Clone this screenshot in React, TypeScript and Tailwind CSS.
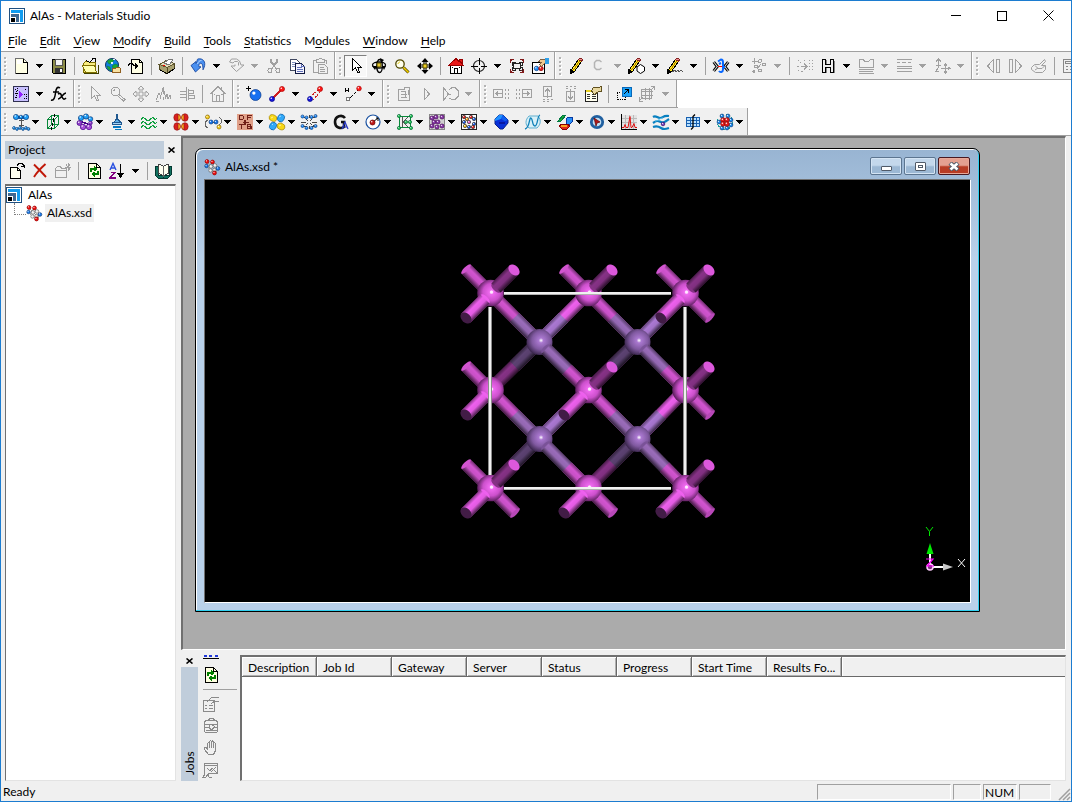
import React from "react";

type Item = string | "-" | "v" | "V";

const G = "#a0a0a0";

function Ball({ x, y, r = 2.2, c = "#1e90ff", s = "#0a3a7a" }: { x: number; y: number; r?: number; c?: string; s?: string }) {
  return (
    <g shapeRendering="auto">
      <circle cx={x} cy={y} r={r} fill={c} stroke={s} strokeWidth={0.7} />
      <circle cx={x - r * 0.3} cy={y - r * 0.35} r={r * 0.3} fill="#fff" stroke="none" />
    </g>
  );
}

const hand = (
  <>
    <path d="M6.5 3.5l2-2h4l3-1v5h-3l-3 3-2-2 2-2z" fill="#f0c890" stroke="#806040" />
    <path d="M13 0h4v6h-4z" fill="#30a0e8" stroke="none" />
  </>
);
const molecule = (
  <g shapeRendering="auto">
    <path d="M3 3l5 5 5 5M8 3l-4 6 6 5 4-5-6-5" stroke="#999" />
    <Ball x={3} y={2.5} r={1.9} c="#f01010" s="#900" />
    <Ball x={8.5} y={3} r={1.9} c="#f01010" s="#900" />
    <Ball x={2.5} y={7} r={1.7} c="#2080f0" />
    <Ball x={7} y={7.5} r={1.8} c="#eee" s="#666" />
    <Ball x={11} y={6.5} r={1.8} c="#eee" s="#666" />
    <Ball x={6.5} y={11.5} r={1.7} c="#eee" s="#666" />
    <Ball x={10.5} y={11} r={1.7} c="#ddd" s="#666" />
    <Ball x={14} y={9.5} r={1.8} c="#2080f0" />
    <Ball x={10.5} y={14} r={1.9} c="#f01010" s="#900" />
  </g>
);
const refresh = (
  <>
    <path d="M2.5.5h8l4 4v11h-12z" fill="#ffffe0" />
    <path d="M10.5.5v4h4" />
    <path d="M5 9V6h4M12 8v3H8" stroke="#008000" strokeWidth="2" />
    <path d="M8 3v6l4-3zM9 8v6l-4-3z" fill="#008000" stroke="none" />
  </>
);
const logo = (
  <>
    <path d="M.5.5h15v15H.5z" fill="#fff" stroke="#205080" />
    <path d="M2 2h12v12h-3V5H2z" fill="#109cf0" stroke="none" />
    <path d="M2 6h8v8H7V9H2z" fill="#406890" stroke="none" />
    <path d="M2 10h4v4H2z" fill="#000" stroke="none" />
  </>
);
const cursor = "M4.500.5v12l3-3 2 5h2l-2-5.500h3.500z";
const cross = "M8 0l3 3H9v4h4V5l3 3-3 3V9H9v4h2l-3 3-3-3h2V9H3v2L0 8l3-3v2h4V3H5z";
const pencil = (
  <>
    <path d="M3.500 11.500l7-10 3 2-7 10-3.500 2z" fill="#ffe820" />
    <path d="M10.500 1.500l1-1h2l1 1-1 2z" fill="#f09090" stroke="#802020" />
    <path d="M3 11l3 3-3.500 1.500z" fill="#000" />
    <path d="M11.500 3l-6 9" stroke="#b08000" />
  </>
);

const icons: Record<string, React.ReactNode> = {
  new: (
    <>
      <path d="M2.500.5h8l3.500 3.500v11.500H2.500z" fill="#ffffe4" stroke="#707070" />
      <path d="M10.500.5v4h4v11h-12" />
      <path d="M4 2h5v4H4z" fill="#fff" stroke="none" />
    </>
  ),
  save: (
    <>
      <path d="M1.500 1.500h13v14h-12l-1-1z" fill="#8c8c48" />
      <path d="M4.500 1.500h7v6h-7z" fill="#f4f4f4" stroke="#555" />
      <path d="M4 10h8v5H4z" fill="#333" stroke="none" />
      <path d="M9 11h2v3H9z" fill="#fff" stroke="none" />
    </>
  ),
  open: (
    <>
      <path d="M1.500 14.500v-9l2-2h3l1 1h6v10z" fill="#f8ec80" stroke="#807000" />
      <path d="M3.500 14.500l-3-7h12l2 7z" fill="#ffffb0" stroke="#807000" />
      <path d="M2 15.500h14V7" stroke="#404000" />
      <path d="M4.500 2.500l3 2 3-3M10 .5h3v3" />
    </>
  ),
  globe: (
    <>
      <g shapeRendering="auto">
        <circle cx="7" cy="7" r="6.500" fill="#1080e0" stroke="#103060" />
        <path d="M2 3l4-2 3 1-2 3-3 1zM7 8l3-2 3 1-1 4-3 1zM2 8l3 1 1 4-3-2z" fill="#20a830" stroke="#075" strokeWidth=".5" />
        <path d="M6 4h2v2H6zM8 1h2v1H8z" fill="#e0f0ff" stroke="none" />
      </g>
      <path d="M7.500 14.500v-4h3l1-1h3l1 1v4z" fill="#f8e0a0" stroke="#906020" />
    </>
  ),
  import: (
    <>
      <path d="M3.500 15.500V1.500h8l3 3v11z" fill="#ffffe4" />
      <path d="M11.500 1.500v3h3" />
      <path d="M0 7.500l2-2h2l2 2h2" />
      <path d="M7 5v6l3-3z" fill="#000" stroke="none" />
    </>
  ),
  print: (
    <>
      <path d="M.5 6.500l7-4 8 3v5l-8 5-7-4z" fill="#a8a070" stroke="#504820" />
      <path d="M.5 6.500l8 3 7-4-8-3z" fill="#e4dcb8" stroke="#605830" />
      <path d="M8.500 9.500v6" stroke="#504820" />
      <path d="M5 5l5-4 4 1-4 5z" fill="#fff" stroke="#777" />
      <path d="M4 7h2v1H4z" fill="red" stroke="none" />
      <path d="M1 12l7 3.500 8-5" />
    </>
  ),
  undo: (
    <g shapeRendering="auto">
      <path d="M1 7.500L6 3.500v2C8 2 6 1 9.500.8c5 0 7 5 3.500 11 0-4-.5-7-3-6.500-1 .5-1.500 2-1 3.500h2L5.500 14z" fill="#4a90f0" stroke="#1848a0" strokeWidth=".9" />
      <path d="M7.500 6c1-2.500 2-3.500 4-3.500" stroke="#b8d8ff" />
    </g>
  ),
  redo: <path d="M10.500 7.500V4.500l-1-1h-3l-1.500 1.500-3.500-1 2-3h5l3 2 1.500 4h3L8.500 13.500 3 8h4V6.500" stroke={G} shapeRendering="auto" />,
  cut: (
    <g stroke={G}>
      <path d="M4.500 1v3l6 7M11.500 1v3l-6 7M5.500 1v2l3 5M10.500 1v2l-3 5" />
      <circle cx="4" cy="12.500" r="2" />
      <circle cx="12" cy="12.500" r="2" />
    </g>
  ),
  copy: (
    <>
      <path d="M1.500 1.500h6l2.500 2.500v8H1.500z" fill="#fff" stroke="#404860" />
      <path d="M3 4.500h4M3 6.500h5M3 8.500h5" stroke="#8090c0" />
      <path d="M6.500 5.500h6l3 3v7h-9z" fill="#f4f4ff" stroke="#101840" />
      <path d="M8 9.500h5M8 11.500h6M8 13.500h6M12.500 5.500v3h3" stroke="#6070b8" />
    </>
  ),
  paste: (
    <g stroke={G}>
      <path d="M6 14.500H1.500v-12h3v-1h2l1-1h2l1 1h2v1h2V6M4.500 2.500v2h8v-2" />
      <path d="M6.500 6.500h6l3 3v6h-9zM8 9.500h4M8 11.500h5M8 13.500h5" />
    </g>
  ),
  select: <path d={cursor} fill="#fff" />,
  rotate: (
    <g shapeRendering="auto">
      <ellipse cx="8" cy="7" rx="6.500" ry="3" strokeWidth="1.300" />
      <ellipse cx="8.500" cy="8" rx="2.800" ry="6.500" strokeWidth="1.300" />
      <path d="M6 5h4v4H6z" fill="#e8c830" stroke="#504800" />
      <path d="M1 8h5l-2 4zM11 8h4l-2 4zM9 0l4 2-3 3z" fill="#000" stroke="none" />
    </g>
  ),
  zoom: (
    <g shapeRendering="auto">
      <circle cx="6" cy="6" r="4.200" fill="#fffff0" stroke="#504800" strokeWidth="1.300" />
      <path d="M9.500 9.500l5 5" stroke="#504000" strokeWidth="3" />
      <path d="M9.500 9.500l5 5" stroke="#f0d000" strokeWidth="1.600" />
      <path d="M4 6c0-1 1-2 2-2" stroke="#e0c800" />
    </g>
  ),
  move: (
    <g shapeRendering="auto">
      <path d="M8 2v12M2 8h12" strokeWidth="3" />
      <path d="M8 3v10M3 8h10" stroke="#fff" strokeWidth="1" />
      <path d="M8 0l3.500 4h-7zM8 16l3.500-4h-7zM0 8l4-3.500v7zM16 8l-4-3.500v7z" fill="#000" stroke="none" />
      <path d="M6 6h4v4H6z" fill="#f0d020" stroke="#504800" />
    </g>
  ),
  home: (
    <>
      <path d="M2.500 7.500v8h11v-8l-5.500-5z" fill="#fff" />
      <path d="M8 .5l7.500 7h-15z" fill="#e81818" stroke="#900" />
      <path d="M11 1h3v5z" fill="#e81818" stroke="#900" />
      <path d="M6.500 15.500v-5h3v5M11 9.500h1M4 9.500h1" />
    </>
  ),
  target: (
    <>
      <circle cx="8" cy="8" r="5.500" shapeRendering="auto" stroke="#222" strokeWidth="1.200" />
      <path d="M8.500 0v7M8.500 10v6M0 8.500h7M10 8.500h6" />
    </>
  ),
  fit: (
    <>
      <path d="M4.500 5.500h7v5h-7zM3 4h3v3H3zM10 4h3v3h-3zM3 9h3v3H3zM10 9h3v3h-3z" stroke="#222" />
      <path d="M5 6h6v4H5z" fill="#f0f0f0" stroke="none" />
      <path d="M1.500 5V1.500H5M1.500 1.500l2 2M11 1.500h3.500V5M14.500 1.500l-2 2M1.500 11v3.500H5M1.500 14.500l2-2M11 14.500h3.500V11M14.500 14.500l-2-2" stroke="#801818" />
    </>
  ),
  props: (
    <>
      <path d="M.5 4.500h12v11H.5z" fill="#fff" />
      <Ball x={4.500} y={10.500} r={2.200} />
      <Ball x={9} y={10.500} r={2.200} c="#e02020" s="#800" />
      {hand}
    </>
  ),
  pencil,
  cring: <path d="M10.500 4l-2-1.500h-3l-2 2v5l2 2h3l2-1.500" stroke="#b4b4b4" shapeRendering="auto" strokeWidth="1.500" />,
  pencilring: (
    <>
      <g transform="translate(-3)">{pencil}</g>
      <path d="M11.500 6.500l4 2.500v4l-4 2.500-3.500-2.500v-4z" fill="#fff" shapeRendering="auto" />
    </>
  ),
  pencilfree: (
    <>
      <g transform="translate(-2)">{pencil}</g>
      <path d="M5 14l3-2 1 2 2-2 1 2 2-2 2 2" stroke="#555" />
    </>
  ),
  clean: (
    <g shapeRendering="auto">
      <path d="M0 4.500l3 4-3 4M1.500 3.500l4 5-4 5M16 4.500l-3 4 3 4M14.500 3.500l-4 5 4 5" strokeWidth="1.200" />
      <path d="M5 8.500h6" stroke="red" />
      <path d="M5 3.500L8 1.500c2 0 2 2 2 3v7c0 3-3 3-4 1.500M6 6l2-1M9 9h3" stroke="#0868ff" strokeWidth="2" />
    </g>
  ),
  addh: (
    <g stroke={G}>
      <path d="M3.500 0v6M.5 3h6M6 11l4-5" />
      <circle cx="5" cy="8.500" r="1.500" />
      <circle cx="9" cy="3" r="1.500" />
      <circle cx="13" cy="6.500" r="1.500" />
      <circle cx="9" cy="12.500" r="1.500" />
      <circle cx="3" cy="13.500" r="1" />
    </g>
  ),
  symm: <path d="M1 2.500h1M3 4.500h1M0 8.500h2M1 12.500h1M4 8.500h5M7 5.500l3 3-3 3M12.500 2v1M15.500 2v1M12.500 5v1M15.500 5v1M12.500 8v1M15.500 8v1M12.500 11v1M15.500 11v1M4 13.500h2M7 2.500h1" stroke={G} />,
  hbond: (
    <>
      <path d="M2.500 1.500h3v5h5v-5h3v13h-3v-5h-5v5h-3z" fill="#f0f0f0" stroke="#000" strokeWidth="1.500" />
      <path d="M6.500 2v4M14.500 3v12M6.500 10v5" stroke="#888" />
    </>
  ),
  layers: <path d="M1.500 1.500h4l1 2h4l2-2h3v8h-14zM1 11.500h15M.5 13.500h14M1 15.500h15" stroke={G} />,
  lines: <path d="M.5 1.500h15M1 4.500h3M6 4.500h4M12 4.500h3M.5 8.500h15M.5 10.500h15M.5 13.500h15" stroke={G} />,
  axes: <path d="M4.500 10V1M2 3.500L4.500 1 7 3.500M4.500 9.500l-3 4h3M7 10.500h9M11.500 6v9M10 7.500l1.500-1.500L13 7.500M10 13.500l1.500 1.500 1.500-1.500M14 9l2 1.500-2 1.500M2 7h5" stroke={G} />,
  prev: <path d="M8.500 1.500v13l-6-6.500zM11.500 1.500h3v13h-3z" stroke={G} />,
  next: <path d="M1.500 1.500h3v13h-3zM7.500 1.500v13l6-6.500z" stroke={G} />,
  record: <path d="M.5 9.500l3-3h5l5-5 1 2-4 4h4v4l-3 3h-7l-4-3zM4 7.500l3 3h4l3-3M4 12l3-2" stroke={G} shapeRendering="auto" />,
  calc: <path d="M1.500 1.500h13v13h-13zM3.500 3.500h9v2h-9zM4 8.500h2M8 8.500h2M4 11.500h2M8 11.500h2" stroke="#888" />,
  script: (
    <>
      <path d="M.5.5h15v15H.5z" fill="#c8c0ff" stroke="#303050" />
      <path d="M2 3.500l2 1M5 2.500l-1 2M2 7.500h3M2 11.500l3 2M13 3.500l-2 1M11 8.500h3M11 12.500h3M13 10v3M3 5v7" strokeDasharray="1 1" />
      <path d="M6 5v7l4-3.500z" fill="#9020ff" stroke="none" />
    </>
  ),
  fx: (
    <g shapeRendering="auto">
      <path d="M9 2c-3-2-4 1-4.500 5S3 15 0 14M2 6h6" strokeWidth="1.500" />
      <path d="M7 8c3-2 3 1 4 3s2 3 4 1M15 7c-3 0-5 6-8 6" strokeWidth="1.600" />
    </g>
  ),
  gselect: <path d={cursor} stroke={G} />,
  gzoom: <path d="M3.500 1.500h4l2 2v4l-2 2h-4l-2-2v-4zM9 8.500l6 5-1.500 1.500-5.500-5M3.500 4.500l2-1" stroke={G} />,
  gmove: <path d={cross} stroke={G} shapeRendering="auto" />,
  peaks: <path d="M0 14l3-7 2 4M7.500 1v2M7.500 5v3M7.500 11v3M4 13l3-11 3 10M9 13l2-5 1 5 2-4 1 4M0 15h3" stroke={G} />,
  tree: <path d="M1 5.500h6M1 8.500h6M1 11.500h6M7.500 1v14M9.500 3v11M10 4.500h4v3h-4M10 9.500h5v3h-5" stroke={G} />,
  ghome: <path d="M.5 8L8 .5 15.500 8M2.500 7v8.500h11V7M11.500 1v3M6.500 15.500v-6h3v6M4 8.500h1M11 8.500h2" stroke={G} />,
  atom: (
    <>
      <path d="M2.500 0v5M0 2.500h5" />
      <Ball x={9.500} y={9} r={5.500} c="#1870f0" s="#083888" />
    </>
  ),
  bond: (
    <>
      <path d="M3 13L13 3" stroke="#d02020" strokeWidth="1.500" />
      <Ball x={3} y={13} r={2.500} c="#1818e0" s="#008" />
      <Ball x={13} y={3} r={2.500} c="#ff1818" s="#a00" />
    </>
  ),
  bond2: (
    <>
      <path d="M3 11l8-7M6 14l7-8" stroke="#d02020" strokeDasharray="2 1" />
      <Ball x={3} y={13} r={2.500} c="#1818e0" s="#008" />
      <Ball x={13} y={3} r={2.500} c="#ff1818" s="#a00" />
    </>
  ),
  hclose: (
    <>
      <path d="M.5 2v5M3.500 2v5M.5 4.500h3M5 12l8-8" strokeDasharray="4 1" />
      <circle cx="3" cy="13" r="2" fill="#fff" stroke="#777" />
      <Ball x={14} y={2.500} r={2.300} c="#ff1818" s="#a00" />
    </>
  ),
  gdoc: <path d="M2.500 3.500h6v-2h5v13h-11zM5 8.500h6M5 11.500h6M5 5.500h4v5M12 4v5" stroke={G} />,
  play: <path d="M5.500 2.500v11l5-5.500z" stroke={G} />,
  loop: <path d="M1.500 1.500v13l5-6.500zM7 4l3-2.500h3l3 3v6l-3 3h-3L7 12M6 8h3" stroke={G} />,
  al1: <path d="M.5 3.500h9v8h-9zM3 7.500h6M5 5.500l-2 2 2 2M12.500 3v2M12.500 7v2M12.500 11v2M15.500 3v2M15.500 7v2M15.500 11v2" stroke={G} />,
  al2: <path d="M6.500 3.500h9v8h-9zM7 7.500h6M11 5.500l2 2-2 2M3.500 3v2M3.500 7v2M3.500 11v2M.5 3v2M.5 7v2M.5 11v2" stroke={G} />,
  al3: <path d="M4.500.5h8v10h-8zM8.500 12V3M6 5.500L8.500 3 11 5.500M4 13.500h2M8 13.500h2M12 13.500h2M4 15.500h2M8 15.500h2" stroke={G} />,
  al4: <path d="M4.500 5.500h8v10h-8zM8.500 3v9M6 10.500L8.500 13 11 10.500M4 .5h2M8 .5h2M12 .5h2M4 2.500h2M12 2.500h2" stroke={G} />,
  table: (
    <>
      <path d="M.5 4.500h12v11H.5z" fill="#fffff0" stroke="#222" />
      <path d="M2 8.500h3M7 8.500h4M2 10.500h3M7 10.500h4M2 12.500h3M7 12.500h4" stroke="#333" />
      <path d="M1 4h8v2H1z" fill="#e8d020" stroke="none" />
      <path d="M6.500 4.500l2-3h5l3-1v5h-3l-4 3-2-2z" fill="#e8d8a0" stroke="#605020" />
    </>
  ),
  scale: (
    <>
      <path d="M6 1h9v9H6z" fill="#18a0f8" stroke="#0868b8" />
      <path d="M8 8l4-4M9 3.500h3.500V7" />
      <path d="M1 6.500h4M1.500 7v7M2 13.500h8M9.500 11v3" strokeDasharray="1 1" />
    </>
  ),
  lattice: <path d="M3 5.500h11M3 9.500h11M6.500 2v12M10.500 2v12M2 3.500h10v9H2zM1 14l3-3M12 4l4-4M12 .5h3.500V4M.5 11v4H4" stroke={G} />,
  m1: (
    <>
      <path d="M3 3h10" stroke="#0868c8" strokeWidth="3" />
      <path d="M8.500 5v8M6 6.500h5M6 11.500h5" stroke="#555" />
      <Ball x={3} y={3} r={2.600} c="#20a0f8" /><Ball x={8} y={3} r={1.800} c="#20a0f8" /><Ball x={13} y={3} r={2.600} c="#20a0f8" />
      {[1, 4, 7, 10, 13, 15.500].map((x, i) => <Ball key={x} x={x} y={i % 2 ? 15 : 14} r={1.400} c="#20a0f8" />)}
    </>
  ),
  m2: (
    <>
      <path d="M2.500 5.500h7v9h-7zM2.500 5.500l4-4h7l-4 4M13.500 1.500v9l-4 4M6.500 1.500v9h7M6.500 10.500l-4 4" stroke="#08883a" strokeWidth="1.200" />
      <path d="M9.500 0v3M8.500 4v4M7.500 9v3M6.500 13v3" stroke="#000" />
    </>
  ),
  m3: (
    <>
      <Ball x={4} y={4} r={2.600} c="#20a0f8" /><Ball x={9} y={2.500} r={2.600} c="#20a0f8" /><Ball x={13.500} y={5} r={2.300} c="#20a0f8" />
      <Ball x={2.500} y={9} r={2.500} c="#9040c8" s="#408" /><Ball x={6} y={13} r={2.700} c="#a850d8" s="#408" /><Ball x={12} y={13} r={2.700} c="#a850d8" s="#408" /><Ball x={13.500} y={9} r={1.800} c="#9040c8" s="#408" />
      <path d="M5 8l3 1 3 1" stroke="#408" strokeWidth="1.500" />
    </>
  ),
  m4: (
    <>
      <path d="M7.500 0h1v5l3 3H5l2.500-3z" fill="#60b0e8" stroke="#205890" />
      <path d="M3.500 8.500h9v2h-9z" fill="#a0d4f8" stroke="#205890" />
      <path d="M4 13h8M6 15.500h7" stroke="#0878c0" strokeWidth="1.300" />
    </>
  ),
  m5: <path d="M0 5.500l2-2 2 1 2 2h2l2-2 2-1 2 2 2-1M0 9.500l2-2 2 1 2 2h2l2-2 2-1 2 2 2-1M0 13.500l2-2 2 1 2 2h2l2-2 2-1 2 2 2-1" stroke="#10a040" />,
  m6: (
    <g shapeRendering="auto" stroke="#901010" strokeWidth=".6">
      {[[4, 3.5], [12, 3.5], [4, 12.5], [12, 12.5]].map(([x, y]) => (
        <g key={`${x}-${y}`}>
          <ellipse cx={x} cy={y} rx="3.200" ry="3.800" fill="#d82020" />
          <path d={x < 8 ? `M${x + 1} ${y - 3}a2.500 3 0 0 1 0 6z` : `M${x - 1} ${y - 3}a2.500 3 0 0 0 0 6z`} fill="#f8b020" />
        </g>
      ))}
    </g>
  ),
  m7: (
    <>
      <path d="M2.500 6l-2 2v4l2 2M14 3l2 2v4l-2 2M5 8h6" stroke="#666" />
      <Ball x={6} y={8} r={2} c="#1878f0" /><Ball x={11} y={8} r={2} c="#1878f0" />
      <Ball x={2.500} y={3} r={2} c="#f8d020" s="#860" /><Ball x={14} y={13} r={2} c="#f8d020" s="#860" />
    </>
  ),
  m8: (
    <>
      <path d="M0 0h16v16H0z" fill="#e0a088" stroke="none" />
      <path d="M2.500 1.500h3l1 1v2l-1 1h-3zM10.500 6V1.500h4M10.500 3.500h3M2 10.500h5M4.500 10.500V15M10.500 10.500h3v4h-3zM10.500 12.500h4v2M8 6v5M5.500 8.500h6" stroke="#702018" strokeWidth="1.200" />
    </>
  ),
  m9: (
    <g shapeRendering="auto" strokeWidth=".6">
      <ellipse cx="4" cy="4" rx="4" ry="3.200" fill="#f8d818" stroke="#a08000" transform="rotate(20 4 4)" />
      <ellipse cx="12" cy="4" rx="3.400" ry="4" fill="#30a8f8" stroke="#0858a0" transform="rotate(30 12 4)" />
      <ellipse cx="4" cy="12" rx="3.400" ry="4" fill="#30a8f8" stroke="#0858a0" transform="rotate(30 4 12)" />
      <ellipse cx="12" cy="12.500" rx="4" ry="3.200" fill="#f8d818" stroke="#a08000" transform="rotate(20 12 12.5)" />
      <path d="M10 3l2-1M3 11l1-1M2 4l2-1M10 12l2-1" stroke="#fff" />
    </g>
  ),
  m10: (
    <>
      <path d="M5 5l2 2M11 5L9 7M5 11l2-2M11 11L9 9M8 1v3M8 12v3M0 8h5M11 8h5M3 3l3 1M11 3l3 1M3 12l3 1M11 13l3-2" stroke="#444" />
      <Ball x={1.500} y={2.500} r={1.500} /><Ball x={5.500} y={3.500} r={1.500} /><Ball x={10.500} y={3} r={1.500} /><Ball x={14.500} y={2} r={1.500} />
      <Ball x={1.500} y={12} r={1.500} /><Ball x={5.500} y={14} r={1.500} /><Ball x={10.500} y={14} r={1.500} /><Ball x={14.500} y={12} r={1.500} />
    </>
  ),
  m11: (
    <g shapeRendering="auto">
      <path d="M12 4C9 0 2 2 2 8s6 7 9 5V8H8" stroke="#111" strokeWidth="2.600" />
      <path d="M9 15l3-7 3 7M10 13h4" stroke="#2838c8" strokeWidth="1.200" />
    </g>
  ),
  m12: (
    <g shapeRendering="auto">
      <circle cx="8" cy="8" r="7" fill="#fff" stroke="#1850a0" strokeWidth="1.200" />
      <path d="M8 8l5-4M11 4h2v3" />
      <Ball x={7.500} y={8.500} r={2.500} c="#c01818" s="#600" />
    </g>
  ),
  m13: (
    <>
      <path d="M2.500 2.500h11v11h-11z" stroke="#08883a" />
      <path d="M5.500 3v10M11 3L6 8l5 5" stroke="#555" strokeWidth="1.200" />
      {[[2, 2], [14, 2], [2, 14], [14, 14], [13, 8], [9, 8]].map(([x, y]) => <Ball key={`${x}-${y}`} x={x} y={y} r={1.600} c="#30c860" s="#063" />)}
    </>
  ),
  m14: (
    <>
      <path d="M.5.5h15v15H.5z" fill="#d0d0d0" stroke="#888" />
      {[[3, 4], [7, 3], [13, 3], [5, 8], [9, 8], [3, 12], [8, 13], [13, 12]].map(([x, y]) => <Ball key={`${x}-${y}`} x={x} y={y} r={2} c="#9040b0" s="#405" />)}
    </>
  ),
  m15: (
    <>
      <path d="M.5.5h15v15H.5z" fill="#fff" stroke="#222" />
      {[[3, 3, "#e02020"], [6, 5, "#f0a020"], [10, 3, "#e02020"], [13, 5, "#2060e0"], [3, 8, "#2060e0"], [8, 8, "#e060c0"], [13, 10, "#2060e0"], [4, 12, "#f0c020"], [8, 13, "#2060e0"], [12, 13, "#e02020"]].map(([x, y, c]) => (
        <Ball key={`${x}-${y}`} x={x as number} y={y as number} r={1.700} c={c as string} s="#333" />
      ))}
    </>
  ),
  m16: (
    <g shapeRendering="auto">
      <path d="M6 1h4l5 5v3l-5 6H7L2 10V5z" fill="#0830d8" stroke="#082088" />
      <path d="M6 1h4L8 5 2 7V5z" fill="#2090ff" stroke="none" />
      <path d="M10 1l5 5-3 1-4-2z" fill="#1060f0" stroke="none" />
      <path d="M6 9h6" stroke="#0818a0" strokeWidth="2" />
    </g>
  ),
  m17: (
    <g shapeRendering="auto">
      <path d="M4 2h9c4 5 2 9-1 12H4C0 11 0 6 4 2z" fill="#d8f0f8" stroke="#60b0d0" />
      <path d="M0 15c5-1 4-12 6-11s1 8 4 8 2-10 5-11" stroke="#1080b8" strokeWidth="1.300" />
    </g>
  ),
  m18: (
    <>
      <path d="M1 7l5-6h3L4 7z" fill="#20b030" stroke="#074" />
      <path d="M9 5l2-2h4v5l-2 2H9z" fill="#2890f8" stroke="#0838a0" />
      <path d="M2 12l3-2h5l3 2-3 3H5z" fill="#e02818" stroke="#800" />
      <path d="M4 12h6" stroke="#f8a020" strokeWidth="1.500" />
    </>
  ),
  m19: (
    <g shapeRendering="auto">
      <circle cx="8" cy="8" r="5.700" fill="#c0dcf0" stroke="#2060a0" strokeWidth="2.800" />
      <path d="M5 4l6 4-3 1-1 3z" fill="#b01818" stroke="#600" strokeWidth=".7" />
    </g>
  ),
  m20: (
    <>
      <path d="M1 1h15v14H1z" fill="#e4e4e4" stroke="none" />
      <path d="M1 4.500h15M1 8.500h15M4.500 1v14M8.500 1v14M12.500 1v14" stroke="#bbb" />
      <path d="M.5 0v15.500H16" />
      <path d="M1 13.500h2l1-3 1 3h2l2-11 1 11h1l2-4 1 4h2" stroke="#e01010" shapeRendering="auto" />
    </>
  ),
  m21: (
    <g shapeRendering="auto" stroke="#0880c0" strokeWidth="2.200">
      <path d="M0 3c3-2 4 1 7 1s3-3 9-2M0 9c4-3 5-2 8-1s4 0 8-3M0 13c3-1 5-1 8 1s5 1 8 0" />
      <path d="M2 7c4 0 4-3 8-3" stroke="#60c8f0" strokeWidth="1" />
      <Ball x={10} y={10} r={1.800} c="#8050c0" s="#306" />
    </g>
  ),
  m22: (
    <>
      <path d="M1.500 3.500h13v9h-13zM1.500 6.500h13M1.500 9.500h13M5.500 3v10M11.500 3v10" fill="#b8e0ff" stroke="#1860b0" />
      <path d="M6 15.500l2-2v-11l2-2" strokeWidth="1.300" shapeRendering="auto" />
    </>
  ),
  m23: (
    <g>
      <circle cx="8" cy="8" r="7.500" stroke="#18a0a0" strokeDasharray="3 3" />
      {[[5, 2], [11, 2], [14, 6], [2, 8], [14, 11], [5, 14], [10, 14]].map(([x, y]) => <Ball key={`${x}-${y}`} x={x} y={y} r={1.900} c="#2090f0" />)}
      {[[6, 6], [10, 6], [6, 10], [10, 10]].map(([x, y]) => <Ball key={`${x}-${y}`} x={x} y={y} r={2.300} c="#e82020" s="#800" />)}
    </g>
  ),
  newdoc: (
    <>
      <path d="M1.500 4.500h7l3 3v8h-10z" fill="#fffff0" />
      <path d="M8.500 4.500v3h3M8 2.500l2-2h3l2 2v2M12 3.500h4" />
    </>
  ),
  del: (
    <g shapeRendering="auto">
      <path d="M2 1.500c4 4 8 8 12 12.500M13.500 1C9 5 5 9 2 14" stroke="#c01808" strokeWidth="1.900" />
    </g>
  ),
  newfolder: <path d="M.5 14.500v-9l2-2h3l1 2h5v9zM.5 7.500h11M13.500 0v8M10 4h6M11 1.500l4 5M15 1.500l-4 5" stroke={G} />,
  refresh,
  sort: (
    <>
      <path d="M1 7l3-6.500L7 7M2 5h4" stroke="#2850e0" strokeWidth="1.400" shapeRendering="auto" />
      <path d="M1.500 9.500H6l-5 5.500h5.500" stroke="#800080" strokeWidth="1.400" />
      <path d="M11.500 1v13" />
      <path d="M9 10.500h5l-2.500 4z" fill="#000" />
    </>
  ),
  book: (
    <>
      <path d="M0 3h3v9h5v3H3l-3-3zM16 3h-2v9H8v3h5l3-3z" fill="#107060" stroke="#043830" />
      <path d="M3.500 1.500l2 0 3 2 3-2h2v9l-3 1-2 2-2-2-3-1z" fill="#fffff0" stroke="#444" />
      <path d="M8.500 3.500v10" stroke="#666" />
    </>
  ),
  jprops: <path d="M.5 4.500h11v11H.5zM2 9.500h2M6 9.500h4M2 12.500h2M6 12.500h4M4 6l4-4 3-1h5M8 8l4-3h4" stroke="#8a8a8a" />,
  jcase: <path d="M2.500 2.500h11l1 2v9l-1 1h-11l-1-1v-9zM5.500 2.500l1-2h4l1 2M2 6.500h12M2 9.500h4l2 2 3-2h3M6 8l2-2 3 2v2l-3 2-2-2zM3 12.500h11" stroke="#8a8a8a" />,
  jhand: <path d="M4.500 10V3.500l1-1 1 1V8M6.500 7V1.500l1-1 1 1V8M8.500 7v-5l1-1 1 1V8M10.500 7V3.500l1-1 1 1v7l-2 4h-5l-4-5v-2h1.500l2 2" stroke="#8a8a8a" />,
  jchart: <path d="M1.500 12V1.500h13v10H5M1.500 3.500h13M4 6l3 3 2-3 5 5M8 10l5-5M2 12l-2 3h3l2-3 1 3h3" stroke="#8a8a8a" />,
  molecule,
  logo,
};

function Icon({ name }: { name: string }) {
  return (
    <svg aria-hidden="true" width="16" height="16" viewBox="0 0 16 16" fill="none" stroke="#000" shapeRendering="crispEdges" className="shrink-0 overflow-visible">
      {icons[name]}
    </svg>
  );
}

function Caret({ dim = false }: { dim?: boolean }) {
  return (
    <svg aria-hidden="true" width="7" height="4" viewBox="0 0 7 4" shapeRendering="crispEdges" className="shrink-0">
      <path d="M0 0h7L3.500 4z" fill={dim ? "#a0a0a0" : "#000"} />
    </svg>
  );
}

function Sep() {
  return (
    <span className="flex h-[18px] w-2 shrink-0 justify-center pl-px">
      <span className="h-full w-px bg-[#a0a0a0]" />
    </span>
  );
}

function Grip() {
  return (
    <span className="flex w-2 shrink-0 flex-col items-center justify-center gap-0.5 self-stretch">
      {[0, 1, 2, 3, 4].map((n) => (
        <span key={n} className="size-0.5 bg-[#b4b4b4] shadow-[1px_1px_0_#fff]" />
      ))}
    </span>
  );
}

function Items({ items, pressed }: { items: Item[]; pressed?: string }) {
  return (
    <>
      {items.map((it, i) =>
        it === "-" ? (
          <Sep key={i} />
        ) : it === "v" || it === "V" ? (
          <button key={i} type="button" aria-label="More options" className="flex h-6 w-[15px] shrink-0 items-center justify-center">
            <Caret dim={it === "V"} />
          </button>
        ) : (
          <button
            key={i}
            type="button"
            aria-label={it}
            className={
              it === pressed
                ? "flex h-[22px] w-[23px] shrink-0 items-center justify-center border border-t-[#808080] border-r-white border-b-white border-l-[#808080] bg-[#f8f8f8]"
                : "flex h-6 w-[23px] shrink-0 items-center justify-center"
            }
          >
            <Icon name={it} />
          </button>
        )
      )}
    </>
  );
}

function Bar({ items, pressed, open = false }: { items: Item[]; pressed?: string; open?: boolean }) {
  return (
    <div
      role="toolbar"
      className={
        open
          ? "flex min-w-0 flex-1 items-center overflow-hidden border-b border-[#a0a0a0] bg-[#f0f0f0]"
          : "flex shrink-0 items-center border-b border-[#a0a0a0] bg-[#f0f0f0]"
      }
    >
      <Grip />
      <Items items={items} pressed={pressed} />
      {!open && <span className="ml-[3px] w-0.5 self-stretch border-r border-l border-r-white border-l-[#a0a0a0]" />}
    </div>
  );
}

const menus: [string, string, string][] = [
  ["", "F", "ile"], ["", "E", "dit"], ["", "V", "iew"], ["", "M", "odify"], ["", "B", "uild"],
  ["", "T", "ools"], ["", "S", "tatistics"], ["M", "o", "dules"], ["", "W", "indow"], ["", "H", "elp"],
];

const modules = Array.from({ length: 23 }, (_, i) => `m${i + 1}`);

const PINK = "#d254d0";
const BRIGHT = "#ee60ee";
const DARKPINK = "#863286";
const PURPLE = "#9a6cba";
const LIGHTPURPLE = "#aa78d2";
const DARKPURPLE = "#5c4272";

function Rod({ x1, y1, x2, y2, a, b }: { x1: number; y1: number; x2: number; y2: number; a: string; b?: string }) {
  const len = Math.hypot(x2 - x1, y2 - y1);
  const angle = (Math.atan2(y2 - y1, x2 - x1) * 180) / Math.PI;
  return (
    <g transform={`translate(${x1} ${y1}) rotate(${angle})`}>
      <rect x="0" y="-6.5" width={len} height="13" fill={a} />
      {b && <rect x={len / 2} y="-6.5" width={len / 2} height="13" fill={b} />}
      <rect x="0" y="-6.5" width={len} height="13" fill={Math.abs(angle) > 90 ? "url(#rodFlip)" : "url(#rod)"} />
    </g>
  );
}

const stubShape = {
  ul: { from: [0, 0], to: [-24, -24], body: PINK, cap: PINK, depth: 2, turn: 45 },
  lr: { from: [0, 0], to: [25, 25], body: PINK, cap: "#b848b8", depth: 2, turn: 45 },
  ur: { from: [6, -5], to: [24, -23], body: DARKPINK, cap: "#dc58dc", depth: 4.5, turn: -45 },
  ll: { from: [-5, 6], to: [-24, 25], body: BRIGHT, cap: "#421c46", depth: 4.5, turn: -45 },
} as const;

function Stub({ x, y, dir }: { x: number; y: number; dir: keyof typeof stubShape }) {
  const s = stubShape[dir];
  const [sx, sy, ex, ey] = [x + s.from[0], y + s.from[1], x + s.to[0], y + s.to[1]];
  return (
    <g>
      {(dir === "ur" || dir === "ll") && <ellipse cx={sx} cy={sy} rx="3" ry="6" fill={s.body} transform={`rotate(${s.turn} ${sx} ${sy})`} />}
      <Rod x1={sx} y1={sy} x2={ex} y2={ey} a={s.body} />
      <ellipse cx={ex} cy={ey} rx={s.depth} ry="6.5" fill={s.cap} transform={`rotate(${s.turn} ${ex} ${ey})`} />
    </g>
  );
}

type Bond = [number, number, number, number, string, string];

function Crystal() {
  const al: [number, number][] = [[490, 293], [588, 293], [685, 293], [490, 390], [588, 390], [685, 390], [490, 488], [588, 488], [685, 488]];
  const as: [number, number][] = [[539, 342], [637, 342], [539, 439], [637, 439]];
  const rear: Bond[] = [
    [490, 390, 539, 342, DARKPINK, DARKPURPLE],
    [588, 390, 637, 342, DARKPINK, DARKPURPLE],
    [490, 488, 539, 439, DARKPINK, DARKPURPLE],
    [588, 488, 637, 439, DARKPINK, DARKPURPLE],
    [490, 293, 539, 342, PINK, PURPLE],
    [588, 293, 637, 342, PINK, PURPLE],
    [490, 390, 539, 439, PINK, PURPLE],
    [588, 390, 637, 439, PINK, PURPLE],
    [588, 293, 539, 342, BRIGHT, LIGHTPURPLE],
    [685, 293, 637, 342, BRIGHT, LIGHTPURPLE],
    [588, 390, 539, 439, BRIGHT, LIGHTPURPLE],
    [685, 390, 637, 439, BRIGHT, LIGHTPURPLE],
  ];
  const front: Bond[] = [
    [546, 349, 588, 390, PURPLE, PINK],
    [644, 349, 685, 390, PURPLE, PINK],
    [546, 446, 588, 488, PURPLE, PINK],
    [644, 446, 685, 488, PURPLE, PINK],
  ];
  const back: [number, number, "ul" | "lr"][] = [
    [490, 293, "ul"], [588, 293, "ul"], [685, 293, "ul"], [685, 293, "lr"], [490, 390, "ul"], [685, 390, "lr"],
    [490, 488, "ul"], [490, 488, "lr"], [588, 488, "lr"], [685, 488, "lr"],
  ];
  const near: [number, number, "ur" | "ll"][] = [
    [490, 293, "ur"], [490, 293, "ll"], [588, 293, "ur"], [685, 293, "ur"], [685, 293, "ll"],
    [490, 390, "ll"], [588, 390, "ur"], [588, 390, "ll"], [685, 390, "ur"],
    [490, 488, "ur"], [490, 488, "ll"], [588, 488, "ll"], [685, 488, "ur"], [685, 488, "ll"],
  ];
  return (
    <svg role="img" aria-label="AlAs crystal structure" viewBox="205 180 765 422" className="block h-full w-full">
      <defs>
        <linearGradient id="rod" x1="0" y1="0" x2="0" y2="1">
          <stop offset="0" stopColor="#000" stopOpacity=".45" />
          <stop offset=".3" stopColor="#000" stopOpacity="0" />
          <stop offset=".6" stopColor="#000" stopOpacity=".05" />
          <stop offset="1" stopColor="#000" stopOpacity=".7" />
        </linearGradient>
        <linearGradient id="rodFlip" x1="0" y1="1" x2="0" y2="0">
          <stop offset="0" stopColor="#000" stopOpacity=".45" />
          <stop offset=".3" stopColor="#000" stopOpacity="0" />
          <stop offset=".6" stopColor="#000" stopOpacity=".05" />
          <stop offset="1" stopColor="#000" stopOpacity=".7" />
        </linearGradient>
        <radialGradient id="al" cx=".54" cy=".47" r=".54">
          <stop offset="0" stopColor="#fff" />
          <stop offset=".16" stopColor="#ee68ee" />
          <stop offset=".6" stopColor="#cc50cc" />
          <stop offset="1" stopColor="#5a1e5c" />
        </radialGradient>
        <radialGradient id="as" cx=".56" cy=".44" r=".58">
          <stop offset="0" stopColor="#fff" />
          <stop offset=".16" stopColor="#aa78d0" />
          <stop offset=".6" stopColor="#8059a0" />
          <stop offset="1" stopColor="#3a264c" />
        </radialGradient>
      </defs>
      {back.map(([x, y, d]) => <Stub key={`${x}${y}${d}`} x={x} y={y} dir={d} />)}
      {rear.map(([x1, y1, x2, y2, a, b]) => <Rod key={`${x1}${y1}${x2}${y2}`} x1={x1} y1={y1} x2={x2} y2={y2} a={a} b={b} />)}
      {as.map(([x, y]) => <circle key={`${x}${y}`} cx={x + 0.5} cy={y} r="13" fill="url(#as)" />)}
      {front.map(([x1, y1, x2, y2, a, b]) => (
        <g key={`${x1}${y1}`}>
          <ellipse cx={x1} cy={y1} rx="3" ry="6" fill="#7a5298" transform={`rotate(45 ${x1} ${y1})`} />
          <Rod x1={x1} y1={y1} x2={x2} y2={y2} a={a} b={b} />
        </g>
      ))}
      {al.map(([x, y]) => <circle key={`${x}${y}`} cx={x + 0.5} cy={y} r="13.300" fill="url(#al)" />)}
      {near.map(([x, y, d]) => <Stub key={`${x}${y}${d}`} x={x} y={y} dir={d} />)}
      {al.map(([x, y]) => <circle key={`${x}${y}`} cx={x + 1.5} cy={y - 1} r="1.500" fill="#ffe8ff" />)}
      <g shapeRendering="crispEdges" fill="none">
        <path d="M504 293.500h167M504 488.500h167" stroke="#b0b0b0" strokeWidth="3" />
        <path d="M490 307v168M685 307v168" stroke="#8c8c8c" strokeWidth="4" />
        <path d="M504 293h167M504 488h167M490 307v168M685 307v168" stroke="#f0f0f0" strokeWidth="2" />
      </g>
      <path d="M930 565v-13" stroke="#fff" strokeWidth="2" />
      <path d="M930 543l3.500 11h-7z" fill="#00e800" />
      <path d="M933 567h12" stroke="#fff" strokeWidth="2" />
      <path d="M943 563.500l10 3.500-10 3.500z" fill="#c8c8c8" />
      <circle cx="930" cy="567" r="3" fill="#803080" stroke="#ffd0ff" strokeWidth="1.500" />
      <path d="M926 559h7l-6 7h7" stroke="#f0f" strokeWidth="1.200" fill="none" />
      <path d="M926 527l3.500 4.500 3.500-4.500M929.500 531.500v4.500" stroke="#00e800" fill="none" />
      <path d="M958 559l7 8M965 559l-7 8" stroke="#fff" fill="none" />
    </svg>
  );
}

const captionBtn =
  "flex h-[18px] w-8 items-center justify-center rounded-[2px] border border-[#5c7590] bg-linear-to-b from-[#c4d8ec] from-45% to-[#9cb8d4] to-55% shadow-[inset_0_0_0_1px_#d4e4f4]";

function DocumentWindow() {
  return (
    <section className="absolute top-2.5 left-3 flex h-[464px] w-[785px] flex-col rounded-t-[7px] border border-black bg-[#b9d1ea] bg-linear-to-b from-[#98b4d2] to-[#b9d1ea] to-[110px] shadow-[inset_-1px_-1px_0_#30d0f0,inset_1px_1px_0_#fff]">
      <header className="flex h-[30px] shrink-0 items-center gap-1 pt-1.5 pr-[9px] pl-2">
        <Icon name="molecule" />
        <h2 className="flex-1 pl-px">AlAs.xsd *</h2>
        <div className="flex gap-0.5 pb-0.5">
          <button type="button" aria-label="Minimize document" className={captionBtn}>
            <span className="mt-1 h-[5px] w-[11px] rounded-[1px] border border-[#505a68] bg-white" />
          </button>
          <button type="button" aria-label="Maximize document" className={captionBtn}>
            <span className="flex h-[9px] w-[11px] items-center justify-center rounded-[1px] border border-[#505a68] bg-white">
              <span className="h-[3px] w-[5px] border border-[#505a68]" />
            </span>
          </button>
          <button
            type="button"
            aria-label="Close document"
            className="flex h-[18px] w-8 items-center justify-center rounded-[2px] border border-[#481820] bg-linear-to-b from-[#e4a090] from-45% to-[#b83c24] to-55% shadow-[inset_0_0_0_1px_#e8a898]"
          >
            <svg aria-hidden="true" width="12" height="9" viewBox="0 0 12 9">
              <path d="M2 1l8 7M10 1L2 8" stroke="#505a68" strokeWidth="4.500" />
              <path d="M2.500 1.500l7 6M9.500 1.500l-7 6" stroke="#fff" strokeWidth="2.600" />
            </svg>
          </button>
        </div>
      </header>
      <div className="mx-2 mb-2 min-h-0 flex-1 border border-t-[#707070] border-r-white border-b-white border-l-[#707070] bg-black">
        <Crystal />
      </div>
    </section>
  );
}

function CloseMark() {
  return (
    <svg aria-hidden="true" width="7" height="6" viewBox="0 0 7 6">
      <path d="M.5.5l6 5M6.500.5l-6 5" stroke="#000" strokeWidth="1.600" />
    </svg>
  );
}

function ProjectPanel() {
  return (
    <aside className="flex w-[175px] shrink-0 flex-col pt-[5px] pl-1">
      <div className="flex h-[18px] shrink-0 items-center">
        <h2 className="h-full flex-1 bg-[#c0cddb] pl-[3px] leading-[18px]">Project</h2>
        <button type="button" aria-label="Close project panel" className="flex w-3 items-center justify-center pl-0.5"><CloseMark /></button>
      </div>
      <div role="toolbar" className="mb-px flex h-6 shrink-0 items-center">
        <Items items={["newdoc", "del", "newfolder", "-", "refresh", "sort", "v", "-", "book"]} />
      </div>
      <div className="flex-1 border border-t-2 border-t-[#707070] border-r-[#e3e3e3] border-b-[#e3e3e3] border-l-[#707070] bg-white">
        <ul>
          <li>
            <div className="flex h-[18px] items-center gap-1">
              <Icon name="logo" />
              <span className="pl-0.5">AlAs</span>
            </div>
            <ul>
              <li className="flex h-[18px] items-center pl-2">
                <span className="h-3 w-3 -translate-y-1 border-b border-l border-dotted border-[#808080]" />
                <Icon name="molecule" />
                <span className="ml-[3px] bg-[#f0f0f0] px-0.5 leading-[18px]">AlAs.xsd</span>
              </li>
            </ul>
          </li>
        </ul>
      </div>
    </aside>
  );
}

const columns = ["Description", "Job Id", "Gateway", "Server", "Status", "Progress", "Start Time", "Results Fo..."];

function JobsPanel() {
  return (
    <section className="flex h-[131px] shrink-0 pt-[5px]">
      <div className="flex w-[17px] shrink-0 flex-col">
        <button type="button" aria-label="Close jobs panel" className="flex h-3 items-center justify-center"><CloseMark /></button>
        <h2 className="flex flex-1 rotate-180 items-center bg-[#c0cddb] pt-1.5 leading-[17px] [writing-mode:vertical-rl]">Jobs</h2>
      </div>
      <div role="toolbar" className="flex w-[42px] shrink-0 flex-col gap-1.5 overflow-hidden pl-[5px]">
        <span className="mb-0.5 flex h-1 w-4 shrink-0 items-start justify-around border-b border-black">
          {[0, 1, 2].map((n) => <span key={n} className="h-0.5 w-[3px] bg-[#2038d8]" />)}
        </span>
        <button type="button" aria-label="Refresh jobs" className="w-4"><Icon name="refresh" /></button>
        <span className="h-px w-[34px] shrink-0 bg-[#a0a0a0]" />
        <button type="button" aria-label="Job properties" className="w-4"><Icon name="jprops" /></button>
        <button type="button" aria-label="Job package" className="w-4"><Icon name="jcase" /></button>
        <button type="button" aria-label="Stop job" className="w-4"><Icon name="jhand" /></button>
        <button type="button" aria-label="Job results" className="w-4"><Icon name="jchart" /></button>
      </div>
      <div className="min-w-0 flex-1 border border-t-2 border-l-2 border-t-[#707070] border-r-[#e3e3e3] border-b-[#e3e3e3] border-l-[#707070] bg-white">
        <table className="w-full table-fixed border-separate border-spacing-0 bg-[#f0f0f0]">
          <thead>
            <tr>
              {columns.map((c) => (
                <th key={c} scope="col" className="h-5 w-[75px] border-r border-b border-r-[#696969] border-b-[#696969] p-0 pt-0.5 pl-1.5 text-left font-normal whitespace-nowrap shadow-[inset_1px_1px_0_#fff,inset_-1px_-1px_0_#b0b0b0]">
                  {c}
                </th>
              ))}
              <td className="border-b border-[#696969] shadow-[inset_1px_1px_0_#fff]" />
            </tr>
          </thead>
        </table>
      </div>
    </section>
  );
}

const pane = "h-4 border border-t-[#a0a0a0] border-r-white border-b-white border-l-[#a0a0a0]";

export default function App() {
  return (
    <div className="flex h-screen flex-col overflow-hidden border border-[#1c7cd0] bg-[#f0f0f0] font-['Lato','Liberation_Sans',sans-serif] text-[12px] leading-4 text-black">
      <header className="flex h-[29px] shrink-0 items-center bg-white pl-2">
        <Icon name="logo" />
        <h1 className="flex-1 pl-[5px]">AlAs - Materials Studio</h1>
        <button type="button" aria-label="Minimize" className="flex w-[46px] justify-center"><span className="h-px w-2.5 bg-black" /></button>
        <button type="button" aria-label="Maximize" className="flex w-[46px] justify-center"><span className="size-2.5 border border-black" /></button>
        <button type="button" aria-label="Close" className="flex w-[46px] justify-center">
          <svg aria-hidden="true" width="11" height="11" viewBox="0 0 11 11"><path d="M.5.5l10 10M10.500.5l-10 10" stroke="#000" /></svg>
        </button>
      </header>
      <nav className="flex h-[21px] shrink-0 items-center gap-[13px] bg-white pl-[7px]">
        {menus.map(([pre, key, post]) => (
          <button key={key + post} type="button">
            {pre}<u className="underline-offset-2">{key}</u>{post}
          </button>
        ))}
      </nav>
      <div className="shrink-0 border-t border-[#a0a0a0] bg-white">
        <div className="flex h-7">
          <Bar items={["new", "v", "save", "-", "open", "globe", "import", "-", "print", "-", "undo", "v", "redo", "V", "cut", "copy", "paste"]} />
          <Bar pressed="select" items={["select", "rotate", "zoom", "move", "-", "home", "target", "v", "fit", "props"]} />
          <Bar items={["pencil", "cring", "V", "pencilring", "v", "pencilfree", "v", "-", "clean", "v", "addh", "V", "-", "symm", "hbond", "v", "layers", "V", "lines", "V", "axes", "V"]} />
          <Bar open items={["prev", "next", "record", "-", "calc"]} />
        </div>
        <div className="flex h-7">
          <Bar items={["script", "v", "fx"]} />
          <Bar items={["gselect", "gzoom", "gmove", "peaks", "tree", "-", "ghome"]} />
          <Bar items={["atom", "bond", "v", "bond2", "v", "hclose", "v"]} />
          <Bar items={["gdoc", "play", "loop", "V"]} />
          <Bar items={["al1", "al2", "al3", "al4", "table", "-", "scale", "lattice", "V"]} />
        </div>
        <div className="flex h-7 border-b border-[#a0a0a0]">
          <div role="toolbar" className="flex items-center border-r border-[#a0a0a0] bg-[#f0f0f0] pr-0.5">
            <Grip />
            {modules.map((m) => (
              <div key={m} className="flex w-8 items-center pl-0.5">
                <button type="button" aria-label={`Module ${m}`} className="flex h-6 w-5 items-center justify-center"><Icon name={m} /></button>
                <button type="button" aria-label="More options" className="flex h-6 w-2 items-center justify-center"><Caret /></button>
              </div>
            ))}
          </div>
        </div>
      </div>
      <main className="flex min-h-0 flex-1">
        <ProjectPanel />
        <div className="flex min-w-0 flex-1 flex-col pr-[5px] pl-[5px]">
          <div className="relative min-h-0 flex-1 overflow-hidden border-t-2 border-r border-b border-l-2 border-t-[#707070] border-r-white border-b-white border-l-[#707070] bg-[#ababab]">
            <DocumentWindow />
          </div>
          <JobsPanel />
        </div>
      </main>
      <footer className="flex h-5 shrink-0 items-center gap-0.5 pt-0.5 pl-0.5">
        <span className="flex-1">Ready</span>
        <span className={`${pane} w-[134px]`} />
        <span className={`${pane} w-7`} />
        <span className={`${pane} w-[34px] pl-px`}>NUM</span>
        <span className={`${pane} w-8`} />
        <svg aria-hidden="true" width="14" height="14" viewBox="0 0 14 14" className="ml-1 self-end"><path d="M2 13L13 2M6 13l7-7M10 13l3-3" stroke="#a0a0a0" strokeWidth="1.500" /></svg>
      </footer>
    </div>
  );
}
